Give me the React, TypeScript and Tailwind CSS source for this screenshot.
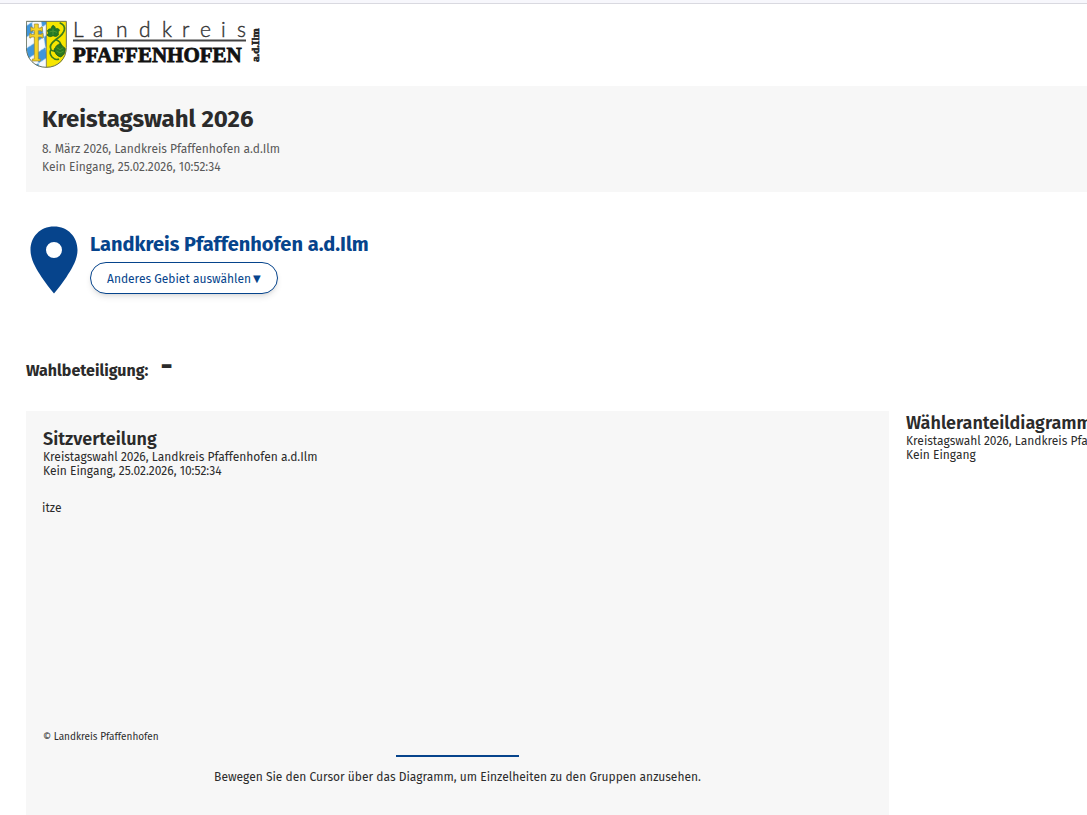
const AREA = "Landkreis Pfaffenhofen a.d.Ilm";

export default function App() {
  return (
    <div className="min-h-screen overflow-hidden bg-white font-['Fira_Sans','Noto_Sans',sans-serif] text-[#2b2b2b]">
      <div className="h-1 border-b border-[#d9d9e0] bg-[#f7f7fc]" />
      <div className="pl-[26px]">
        <header className="pt-4">
          <a href="#start" className="inline-block align-top" aria-label="Landkreis Pfaffenhofen a.d.Ilm">
            <Logo />
          </a>
        </header>

        <section className="mt-4 bg-[#f7f7f7] px-4 pt-4 pb-4">
          <h1 className="text-2xl leading-[34px] font-bold">Kreistagswahl 2026</h1>
          <p className="mt-1 text-xs leading-[18px] text-[#595959]">8. März 2026, {AREA}</p>
          <p className="text-xs leading-[18px] text-[#595959]">Kein Eingang, 25.02.2026, 10:52:34</p>
        </section>

        <section className="mt-[34px] flex gap-3 pl-1">
          <Pin />
          <div>
            <h2 className="pt-[2px] pb-[2px] text-xl leading-8 font-bold text-[#06448c]">{AREA}</h2>
            <button
              type="button"
              className="flex h-8 items-center gap-[2px] rounded-full border border-[#06448c] bg-white px-4 pt-[2px] text-xs text-[#06448c] shadow-md"
            >
              Anderes Gebiet auswählen
              <span className="font-['DejaVu_Sans',sans-serif] text-[10px]">▼</span>
            </button>
          </div>
        </section>

        <div className="mt-[60px] flex h-8 items-center gap-3 text-base font-bold">
          <span className="pt-[2px]">Wahlbeteiligung:</span>
          <span className="pb-2 text-3xl leading-6">-</span>
        </div>

        <div className="mt-[25px] flex gap-[17px]">
          <section className="flex w-[calc(100%-198px)] shrink-0 flex-col bg-[#f7f7f7] px-4 pt-4 pb-10">
            <div className="pl-px">
              <CardHead title="Sitzverteilung" status="Kein Eingang, 25.02.2026, 10:52:34" />
            </div>
            <div className="h-[250px] pt-[22px] text-xs leading-[16px]">itze</div>
            <p className="pl-px text-[10px] leading-[18px]">© Landkreis Pfaffenhofen</p>
            <hr className="mt-[9px] w-[123px] self-center border-t-2 border-[#06448c]" />
            <p className="mt-3 text-center text-xs leading-[16px]">
              Bewegen Sie den Cursor über das Diagramm, um Einzelheiten zu den Gruppen anzusehen.
            </p>
          </section>
          <section className="w-[calc(100%-198px)] shrink-0">
            <CardHead title="Wähleranteildiagramm" status="Kein Eingang" />
          </section>
        </div>
      </div>
    </div>
  );
}

function CardHead({ title, status }: { title: string; status: string }) {
  return (
    <div className="pt-px">
      <h3 className="text-lg leading-[22px] font-semibold">{title}</h3>
      <p className="text-xs leading-[14px] whitespace-nowrap">Kreistagswahl 2026, {AREA}</p>
      <p className="text-xs leading-[14px]">{status}</p>
    </div>
  );
}

function Pin() {
  return (
    <svg width="48" height="68" viewBox="0 0 48 68" aria-hidden="true">
      <path
        fill="#06448c"
        fillRule="evenodd"
        d="M24 .5C10 .5 .5 11 .5 24c0 10 6 19 11 27 4 6 8 11 12.500 16.500 4.500-5.500 8.500-10.500 12.500-16.500 5-8 11-17 11-27C47.500 11 38 .5 24 .5Zm0 15.500a8 8 0 1 1 0 16 8 8 0 0 1 0-16Z"
      />
    </svg>
  );
}

function Logo() {
  return (
    <svg width="238" height="50" viewBox="0 0 238 50" role="img" aria-hidden="true">
      <defs>
        <clipPath id="shield">
          <path d="M18 33H140V112C140 148 115 173 79 173C43 173 18 148 18 112Z" />
        </clipPath>
        {/* Bavarian lozenges */}
        <pattern id="lozenges" width="34" height="52" patternUnits="userSpaceOnUse" patternTransform="translate(20 30) rotate(24)">
          <rect width="34" height="52" fill="#f6fafd" />
          <path d="M17 0L34 26L17 52L0 26Z" fill="#3f96dc" />
        </pattern>
      </defs>
      <g transform="translate(-6 -10) scale(0.3333)">
        <g clipPath="url(#shield)">
          <rect x="18" y="33" width="61" height="142" fill="url(#lozenges)" />
          <rect x="79" y="33" width="62" height="142" fill="#f7e600" />
          {/* double cross */}
          <path
            d="M43 42h12v12h8v-3h4v13h-4v-2h-8v11h10v-3h4v14h-4v-3H55v66h6v6H37v-6h6V81H33v3h-4V70h4v3h10V62h-7v2h-4V51h4v3h7z"
            fill="#f5d426"
            stroke="#9a8430"
            strokeWidth="2"
          />
          {/* hop vine */}
          <path
            d="M119 38c10 4 16 12 14 22-3 14-14 20-27 30-12 9-19 19-13 29 4 7 12 4 18 2M108 89c11 4 15 9 14 17M93 119c-5 8-3 15 3 22 7 7 15 9 21 6"
            fill="none"
            stroke="#3c7d1d"
            strokeWidth="5"
          />
          <path
            d="M99 46c5 2 8 6 7 11 5-3 11-1 13 4-4 3-5 7-3 13-5 6-11 7-17 3-6 5-13 4-18-2 5-4 5-8 1-12 2-6 8-8 12-6-1-4 1-8 5-11Z"
            fill="#237a25"
            stroke="#1c5a20"
            strokeWidth="2"
          />
          <path
            d="M120 101c5 3 8 6 9 9 6 2 9 8 6 13 0 8-6 14-13 18-8-2-14-7-16-13-5-5-5-11 0-15 2-6 8-10 14-12Z"
            fill="#2b791f"
            stroke="#174b1c"
            strokeWidth="2"
          />
          <path
            d="M88 66l11-3 12 4M99 56v19M110 113l10 6 10-6M109 123l11 6 11-6"
            fill="none"
            stroke="#5ea33a"
            strokeWidth="2"
          />
          <path d="M79 33v141" stroke="#555" strokeWidth="2" />
        </g>
        <path d="M19 34H139V112C139 147 114 172 79 172C44 172 19 147 19 112Z" fill="none" stroke="#66705c" strokeWidth="3" />
      </g>
      <text
        x="47 67 90 113 136 156 174 195 211"
        y="17"
        fill="#333"
        stroke="#333"
        strokeWidth="0.4"
        className="font-['Lato',sans-serif] text-[21px] font-light"
      >
        Landkreis
      </text>
      <path d="M47 20.5H220" stroke="#444" strokeWidth="2" />
      <text x="47" y="42" stroke="#111" strokeWidth="0.8" fill="#111" className="font-['Liberation_Serif',serif] text-[21px] font-bold">
        PFAFFENHOFEN
      </text>
      <text
        transform="translate(233 42) rotate(-90)"
        fill="#222"
        stroke="#222"
        strokeWidth="0.6"
        className="font-['Liberation_Serif',serif] text-[11px] font-bold"
      >
        a.d.Ilm
      </text>
    </svg>
  );
}
